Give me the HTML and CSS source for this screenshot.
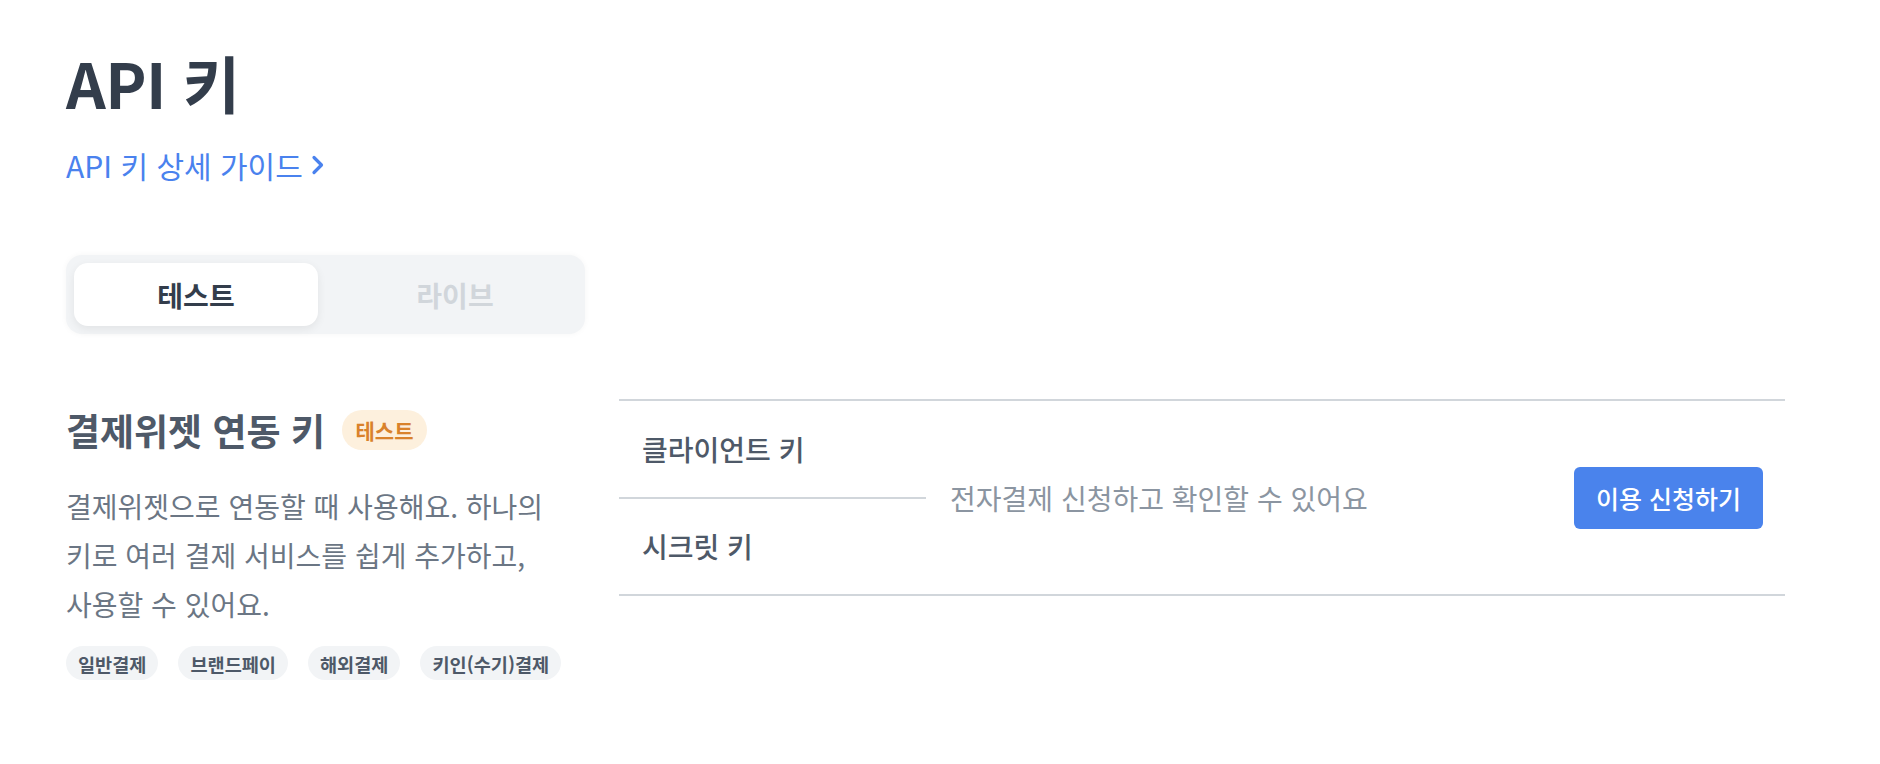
FILE: index.html
```html
<!DOCTYPE html>
<html lang="ko">
<head>
<meta charset="utf-8">
<title>API 키</title>
<link rel="stylesheet" href="styles.css">
</head>
<body>
<main class="page">
  <h1 class="title">API 키</h1>
  <a class="guide-link" href="#">API 키 상세 가이드
    <svg class="chev" width="16" height="26" viewBox="0 0 16 26"><path d="M4 5.5 L11.5 13 L4 20.5" fill="none" stroke="currentColor" stroke-width="3.2" stroke-linecap="round" stroke-linejoin="round"/></svg>
  </a>

  <div class="tabs">
    <button class="tab active">테스트</button>
    <button class="tab">라이브</button>
  </div>

  <section class="key-section">
    <div class="info">
      <div class="info-head">
        <h2 class="info-title">결제위젯 연동 키</h2>
        <span class="badge">테스트</span>
      </div>
      <p class="info-desc">결제위젯으로 연동할 때 사용해요. 하나의 키로 여러 결제 서비스를 쉽게 추가하고, 사용할 수 있어요.</p>
      <ul class="chips">
        <li class="chip">일반결제</li>
        <li class="chip">브랜드페이</li>
        <li class="chip">해외결제</li>
        <li class="chip">키인(수기)결제</li>
      </ul>
    </div>
    <div class="keys">
      <div class="key-labels">
        <div class="key-label">클라이언트 키</div>
        <div class="key-label">시크릿 키</div>
      </div>
      <div class="key-empty">
        <span class="empty-text">전자결제 신청하고 확인할 수 있어요</span>
        <button class="apply-btn">이용 신청하기</button>
      </div>
    </div>
  </section>
</main>
</body>
</html>
```

FILE: styles.css
```css
* { box-sizing: border-box; }
html, body { margin: 0; padding: 0; background: #fff; }
body {
  font-family: "Noto Sans CJK KR", "Noto Sans", sans-serif;
  color: #333d4b;
  word-break: keep-all;
}
.page {
  padding: 40px 95px 0 66px;
}
.title {
  margin: 0;
  font-size: 62px;
  font-weight: 700;
  line-height: 84px;
  color: #333d4b;
  letter-spacing: -0.5px;
}
.guide-link {
  display: flex;
  width: max-content;
  align-items: center;
  gap: 7px;
  margin-top: 21px;
  font-size: 30px;
  line-height: 40px;
  color: #4a82ee;
  text-decoration: none;
}
.chev { display: block; }
.tabs {
  margin-top: 70px;
  width: 519px;
  height: 79px;
  display: flex;
  gap: 15px;
  padding: 8px;
  background: #f2f4f6;
  border-radius: 16px;
  box-shadow: 0 0 6px rgba(0,0,0,0.04);
}
.tab {
  width: 244px;
  border: 0;
  border-radius: 14px;
  background: transparent;
  font-family: inherit;
  font-size: 28px;
  font-weight: 600;
  color: #d1d6db;
  cursor: pointer;
}
.tab.active {
  background: #fff;
  color: #333d4b;
  box-shadow: 0 3px 10px rgba(0,0,0,0.07);
}
.key-section {
  margin-top: 65px;
  display: flex;
  gap: 34px;
}
.info {
  width: 519px;
  flex: none;
  padding-top: 9px;
}
.info-head {
  display: flex;
  align-items: center;
  gap: 17px;
}
.info-title {
  margin: 0;
  font-size: 37px;
  line-height: 44px;
  font-weight: 700;
  color: #4e5968;
}
.badge {
  display: inline-flex;
  align-items: center;
  justify-content: center;
  width: 85px;
  height: 40px;
  border-radius: 20px;
  background: #fdf0dd;
  color: #d9822b;
  font-size: 21px;
  font-weight: 600;
}
.info-desc {
  margin: 30px 0 0;
  font-size: 28px;
  line-height: 49px;
  color: #6b7684;
}
.chips {
  list-style: none;
  margin: 17px 0 0;
  padding: 0;
  display: flex;
  gap: 20px;
}
.chip {
  height: 34px;
  padding: 0 12px;
  display: inline-flex;
  align-items: center;
  border-radius: 17px;
  background: #f2f4f6;
  color: #4e5968;
  font-size: 18.6px;
  font-weight: 600;
  white-space: nowrap;
}
.keys {
  flex: 1;
  height: 197px;
  display: flex;
  border-top: 2px solid #d1d6db;
  border-bottom: 2px solid #d1d6db;
}
.key-labels {
  width: 307px;
  display: flex;
  flex-direction: column;
}
.key-label {
  flex: 1;
  display: flex;
  align-items: center;
  padding-left: 23px;
  font-size: 28px;
  font-weight: 500;
  color: #4e5968;
}
.key-label + .key-label {
  border-top: 2px solid #d1d6db;
}
.key-empty {
  flex: 1;
  display: flex;
  align-items: center;
  justify-content: space-between;
  padding: 0 22px 0 24px;
}
.empty-text {
  font-size: 28px;
  color: #8b95a1;
}
.apply-btn {
  width: 189px;
  height: 62px;
  border: 0;
  border-radius: 6px;
  background: #4a83ec;
  color: #fff;
  font-family: inherit;
  font-size: 25px;
  font-weight: 500;
  cursor: pointer;
}
```
